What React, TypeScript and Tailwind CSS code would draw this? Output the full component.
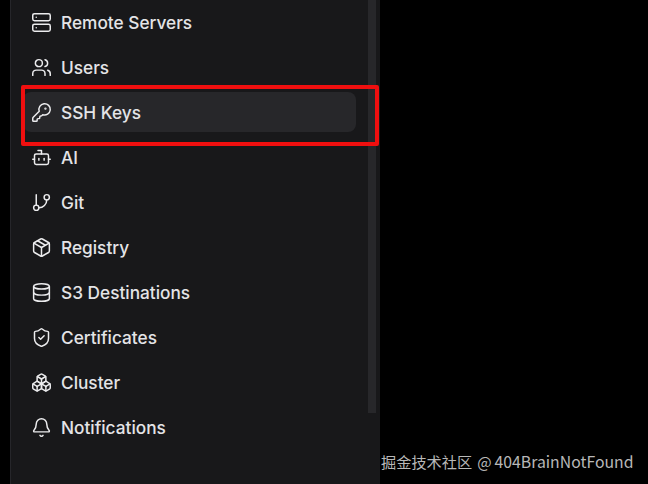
import React from 'react';
import { Server, Users, KeyRound, Bot, GitBranch, Package, Database, ShieldCheck, Boxes, Bell } from 'lucide-react';

const navItems = [
  { label: 'Remote Servers', icon: Server },
  { label: 'Users', icon: Users },
  { label: 'SSH Keys', icon: KeyRound, active: true },
  { label: 'AI', icon: Bot },
  { label: 'Git', icon: GitBranch },
  { label: 'Registry', icon: Package },
  { label: 'S3 Destinations', icon: Database },
  { label: 'Certificates', icon: ShieldCheck },
  { label: 'Cluster', icon: Boxes },
  { label: 'Notifications', icon: Bell },
];

const App: React.FC = () => {
  return (
    <div className="relative flex h-[484px] w-[648px] overflow-hidden bg-black font-['Inter',sans-serif]">
      <aside className="ml-[10px] flex h-full w-[370px] border-l border-[#26262a] bg-[#18181a]">
        <nav className="flex w-[345px] flex-col gap-[5px] pl-[12px] pt-[2px]">
          {navItems.map((item) => {
            const Icon = item.icon;
            return (
              <div
                key={item.label}
                className={`flex h-[40px] items-center gap-[9px] rounded-lg pl-[8px] text-[17.25px] font-medium text-[#e4e4e7] ${
                  item.active ? 'bg-[#27272a]' : ''
                }`}
              >
                <Icon size={21} strokeWidth={1.7} className="shrink-0 text-[#ececee]" />
                <span className="pt-[2px]">{item.label}</span>
              </div>
            );
          })}
        </nav>
        <div className="ml-[12px] h-[413px] w-[8px] bg-[#27272a]" />
      </aside>

      {/* red highlight drawn over the screenshot */}
      <div className="absolute left-[21px] top-[85px] h-[61px] w-[358px] rounded-[2px] border-4 border-[#f00f0f]" />

      <div className="absolute left-[381px] top-[450px] flex items-baseline font-['Noto_Sans_CJK_SC','Noto_Sans',sans-serif] text-[15.2px] leading-[22px] text-[#b8b8b8]">
        <span>掘金技术社区</span>
        <span className="ml-[5px]">@</span>
        <span className="ml-[3px] text-[15.8px]">404BrainNotFound</span>
      </div>
    </div>
  );
};

export default App;
